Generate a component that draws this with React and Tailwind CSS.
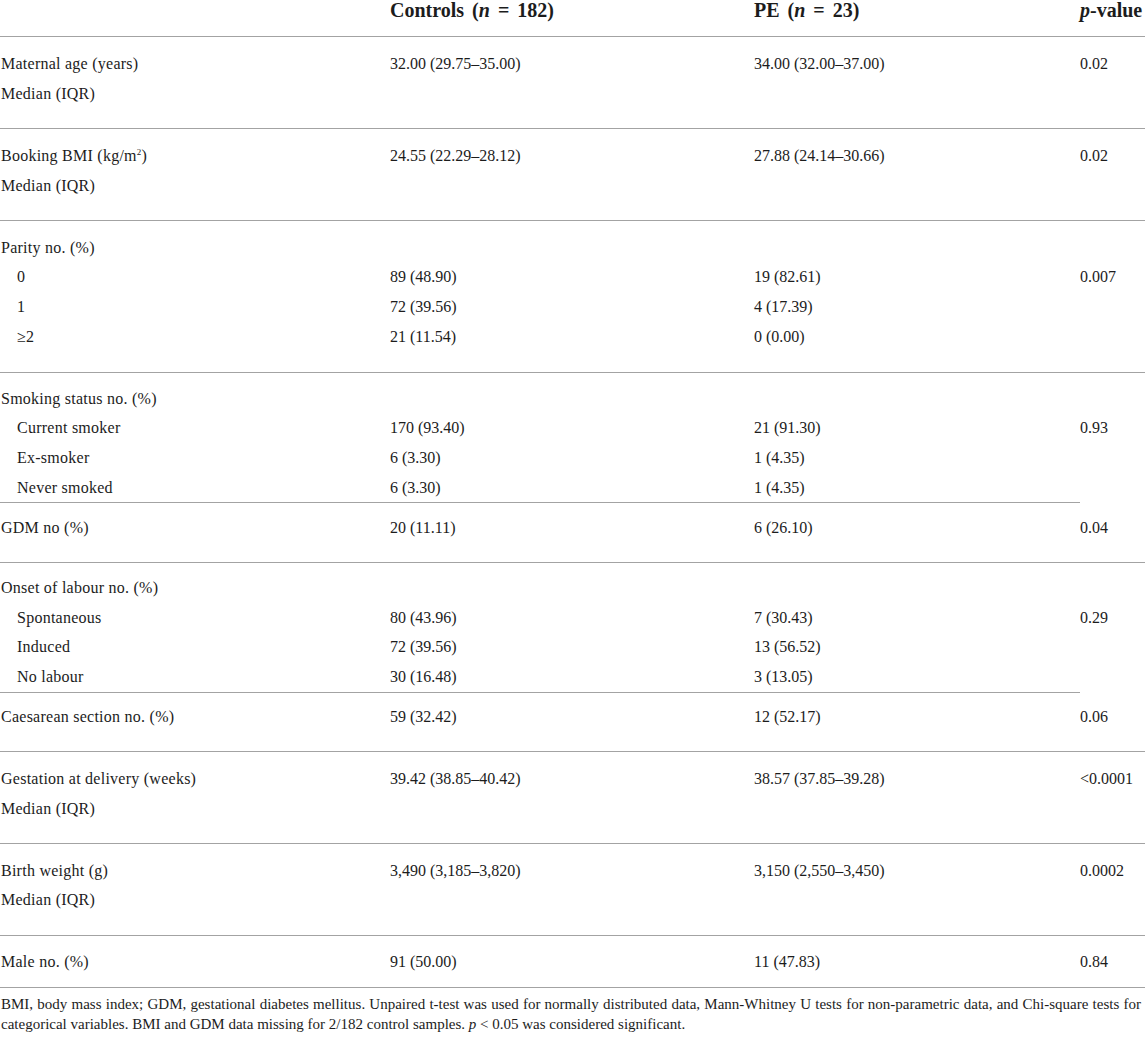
import React from "react";

const rows = [
  {
    label: [["Maternal age (years)"], ["Median (IQR)"]],
    c: ["32.00 (29.75–35.00)"],
    pe: ["34.00 (32.00–37.00)"],
    p: ["0.02"],
    pad: "pt-[12px] pb-[20px]",
  },
  {
    label: [
      [
        <span key="a">
          Booking BMI (kg/m<sup className="text-[9px] relative -top-[6px]">2</sup>)
        </span>,
      ],
      ["Median (IQR)"],
    ],
    c: ["24.55 (22.29–28.12)"],
    pe: ["27.88 (24.14–30.66)"],
    p: ["0.02"],
    pad: "pt-[12px] pb-[19px]",
  },
  {
    label: [["Parity no. (%)"], ["0", true], ["1", true], ["≥2", true]],
    c: ["", "89 (48.90)", "72 (39.56)", "21 (11.54)"],
    pe: ["", "19 (82.61)", "4 (17.39)", "0 (0.00)"],
    p: ["", "0.007"],
    pad: "pt-[12px] pb-[20px]",
  },
  {
    label: [
      ["Smoking status no. (%)"],
      ["Current smoker", true],
      ["Ex-smoker", true],
      ["Never smoked", true],
    ],
    c: ["", "170 (93.40)", "6 (3.30)", "6 (3.30)"],
    pe: ["", "21 (91.30)", "1 (4.35)", "1 (4.35)"],
    p: ["", "0.93"],
    pad: "pt-[11px] pb-0",
    partial: true,
  },
  {
    label: [["GDM no (%)"]],
    c: ["20 (11.11)"],
    pe: ["6 (26.10)"],
    p: ["0.04"],
    pad: "pt-[10px] pb-[19px]",
  },
  {
    label: [
      ["Onset of labour no. (%)"],
      ["Spontaneous", true],
      ["Induced", true],
      ["No labour", true],
    ],
    c: ["", "80 (43.96)", "72 (39.56)", "30 (16.48)"],
    pe: ["", "7 (30.43)", "13 (56.52)", "3 (13.05)"],
    p: ["", "0.29"],
    pad: "pt-[10px] pb-0",
    partial: true,
  },
  {
    label: [["Caesarean section no. (%)"]],
    c: ["59 (32.42)"],
    pe: ["12 (52.17)"],
    p: ["0.06"],
    pad: "pt-[9px] pb-[20px]",
  },
  {
    label: [["Gestation at delivery (weeks)"], ["Median (IQR)"]],
    c: ["39.42 (38.85–40.42)"],
    pe: ["38.57 (37.85–39.28)"],
    p: ["<0.0001"],
    pad: "pt-[12px] pb-[19px]",
  },
  {
    label: [["Birth weight (g)"], ["Median (IQR)"]],
    c: ["3,490 (3,185–3,820)"],
    pe: ["3,150 (2,550–3,450)"],
    p: ["0.0002"],
    pad: "pt-[12px] pb-[20px]",
  },
  {
    label: [["Male no. (%)"]],
    c: ["91 (50.00)"],
    pe: ["11 (47.83)"],
    p: ["0.84"],
    pad: "pt-[11px] pb-[10px]",
  },
];

function Lines({ items }) {
  return (
    <div className="flex flex-col">
      {items.map((t, i) => (
        <div key={i} className="leading-[29.7px] h-[29.7px] whitespace-nowrap">
          {t === "" ? "\u00a0" : t}
        </div>
      ))}
    </div>
  );
}

function Row({ r }) {
  const border = "border-b border-[#a3a3a3]";
  return (
    <div
      className={
        "grid grid-cols-[390px_364px_326px_1fr] " + (r.partial ? "" : border)
      }
    >
      <div className={"col-span-3 grid grid-cols-[390px_364px_326px] " + r.pad + " " + (r.partial ? border : "")}>
        <div className="flex flex-col pl-[1px] tracking-[0.25px]">
          {r.label.map(([t, sub], i) => (
            <div
              key={i}
              className={
                "leading-[29.7px] h-[29.7px] whitespace-nowrap " +
                (sub ? "pl-[16px]" : "")
              }
            >
              {t}
            </div>
          ))}
        </div>
        <Lines items={r.c} />
        <Lines items={r.pe} />
      </div>
      <div className={r.pad}>
        <Lines items={r.p} />
      </div>
    </div>
  );
}

export default function App() {
  return (
    <div
      className="w-[1145px] h-[1037px] overflow-hidden bg-white text-[#1c1c1c] text-[16px]"
      style={{ fontFamily: '"Liberation Serif", "Times New Roman", serif' }}
    >
      <div className="grid grid-cols-[390px_364px_326px_1fr] h-[37px] border-b border-[#a3a3a3] text-[20px] font-bold leading-[20px] whitespace-nowrap [word-spacing:3px]">
        <div></div>
        <div>
          Controls (<span className="italic">n</span> = 182)
        </div>
        <div>
          PE (<span className="italic">n</span> = 23)
        </div>
        <div>
          <span className="italic">p</span>-value
        </div>
      </div>
      {rows.map((r, i) => (
        <Row key={i} r={r} />
      ))}
      <div className="pt-[6px] pl-[1px] text-[15px] leading-[20px]">
        <div className="whitespace-nowrap text-justify [text-align-last:justify] w-[1140px]">
          BMI, body mass index; GDM, gestational diabetes mellitus. Unpaired t-test was used for normally distributed data, Mann-Whitney U tests for non-parametric data, and Chi-square tests for
        </div>
        <div className="whitespace-nowrap">
          categorical variables. BMI and GDM data missing for 2/182 control samples.{" "}
          <span className="italic">p</span> &lt; 0.05 was considered significant.
        </div>
      </div>
    </div>
  );
}
